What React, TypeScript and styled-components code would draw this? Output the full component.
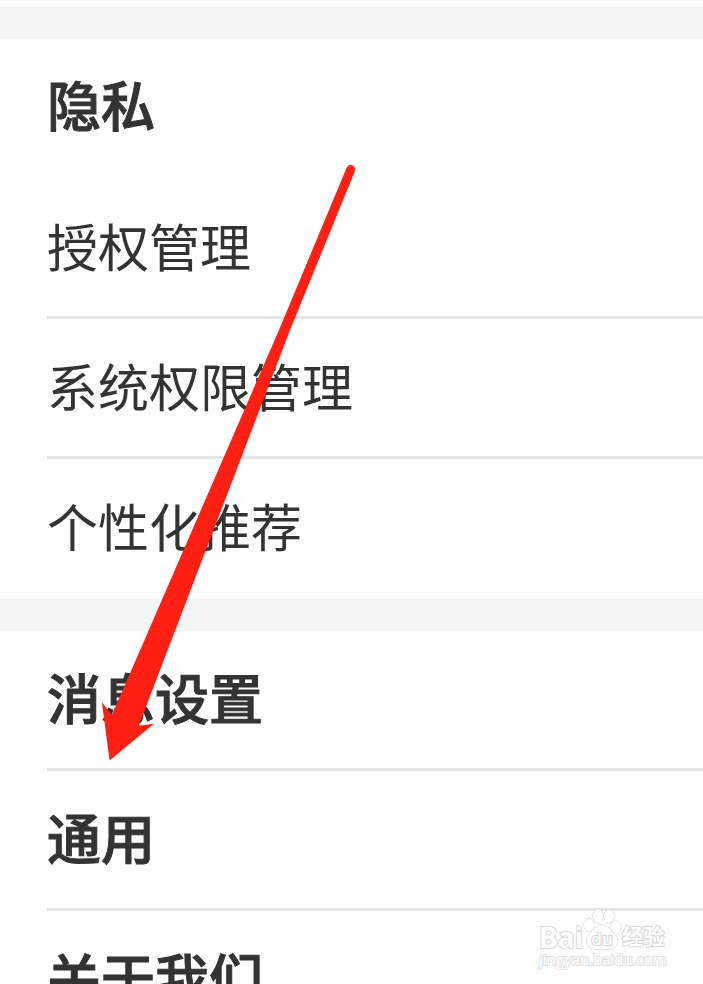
import React from "react";
import styled, { createGlobalStyle, css } from "styled-components";

const GlobalStyle = createGlobalStyle`
  *, *::before, *::after { box-sizing: border-box; }
  body {
    margin: 0;
    background: #fefefe;
    color: #333333;
    font-family: "Noto Sans CJK SC", "Noto Sans", sans-serif;
  }
`;

const headingText = css`
  font-size: 54px;
  font-weight: 500;
  -webkit-text-stroke: 1px currentColor;
`;

const Screen = styled.div`
  position: relative;
  height: 100vh;
  overflow: hidden auto;
  scrollbar-width: none;
  padding-top: 7px;
`;

const Section = styled.section`
  border-top: 32px solid #f5f5f5;
`;

const SectionTitle = styled.h2`
  display: flex;
  align-items: center;
  height: 140px;
  margin: 0;
  padding: 0 0 10px 47px;
  line-height: 80px;
  ${headingText}
`;

const List = styled.ul`
  margin: 0;
  padding: 0 0 0 47px;
  list-style: none;
`;

const Item = styled.li`
  border-bottom: 3px solid #e5e5e5;

  &:last-child {
    border-bottom-color: transparent;
  }
`;

const RowButton = styled.button<{ $strong?: boolean }>`
  display: flex;
  align-items: center;
  width: 100%;
  height: 137px;
  padding: 0 0 6px;
  border: 0;
  background: none;
  color: inherit;
  font-family: inherit;
  font-size: 51px;
  font-weight: 400;
  line-height: 80px;
  text-align: left;
  white-space: nowrap;
  cursor: pointer;
  ${(p) => p.$strong && headingText}
`;

const ArrowMark = styled.svg`
  position: absolute;
  top: 160px;
  left: 96px;
  width: 264px;
  height: 606px;
  pointer-events: none;
`;

const Watermark = styled.div`
  position: absolute;
  top: 908px;
  right: 36px;
  display: flex;
  flex-direction: column;
  width: 128px;
  pointer-events: none;
  color: #ffffff;
  font-family: "Open Sans", "Noto Sans CJK SC", sans-serif;
  white-space: nowrap;
  -webkit-text-stroke: 2px #d9d9d9;
  paint-order: stroke fill;
`;

const Brand = styled.div`
  display: flex;
  align-items: flex-end;
  height: 42px;
`;

const BrandText = styled.span<{ $cjk?: boolean }>`
  font-size: ${(p) => (p.$cjk ? 21 : 28)}px;
  line-height: ${(p) => (p.$cjk ? 28 : 26)}px;
  font-weight: 700;
`;

const Paw = styled.svg`
  flex: none;
  width: 39px;
  height: 42px;
`;

const SiteName = styled.span`
  font-size: 15px;
  line-height: 18px;
  font-weight: 400;
  -webkit-text-stroke-color: #e2e2e2;
`;

const privacyRows = ["授权管理", "系统权限管理", "个性化推荐"];
const generalRows = ["消息设置", "通用", "关于我们"];

function Rows({ labels, strong }: { labels: string[]; strong?: boolean }) {
  return (
    <List>
      {labels.map((label) => (
        <Item key={label}>
          <RowButton type="button" $strong={strong}>
            {label}
          </RowButton>
        </Item>
      ))}
    </List>
  );
}

export default function App() {
  return (
    <>
      <GlobalStyle />
      <Screen>
        <Section>
          <SectionTitle>隐私</SectionTitle>
          <Rows labels={privacyRows} />
        </Section>
        <Section>
          <Rows labels={generalRows} strong />
        </Section>

        <Watermark>
          <Brand>
            <BrandText>Bai</BrandText>
            <Paw viewBox="0 0 39 42" aria-hidden="true">
              <g fill="#ffffff" stroke="#cccccc" strokeWidth="1">
                <ellipse cx="6" cy="17" rx="5" ry="6.5" />
                <ellipse cx="15" cy="8" rx="5" ry="7" />
                <ellipse cx="26" cy="8.5" rx="5" ry="6.5" />
                <ellipse cx="33" cy="19" rx="5" ry="6" />
                <path d="M19 17C13 17 11 22 7 26C3 30 3 35 5 38C8 42 13 41 19 41C25 41 30 42 33 38C36 35 35 30 31 26C27 22 25 17 19 17Z" />
              </g>
              <text
                x="19"
                y="37"
                textAnchor="middle"
                fontSize="17"
                fontWeight="600"
                fill="#ffffff"
                stroke="#d4d4d4"
                strokeWidth="2"
              >
                du
              </text>
            </Paw>
            <BrandText $cjk>经验</BrandText>
          </Brand>
          <SiteName>jingyan.baidu.com</SiteName>
        </Watermark>

        <ArrowMark viewBox="96 160 264 606" aria-hidden="true">
          <path
            fill="#ff2013"
            d="M346.5 168C348 164 352 164.500 353.500 166C355.500 168 355 170.500 354.500 172L290 330L171.500 640L138.700 725.700L154 723.700L109.600 760.500L101.800 702L111.700 715.300L144.500 640L279 330Z"
          />
        </ArrowMark>
      </Screen>
    </>
  );
}
